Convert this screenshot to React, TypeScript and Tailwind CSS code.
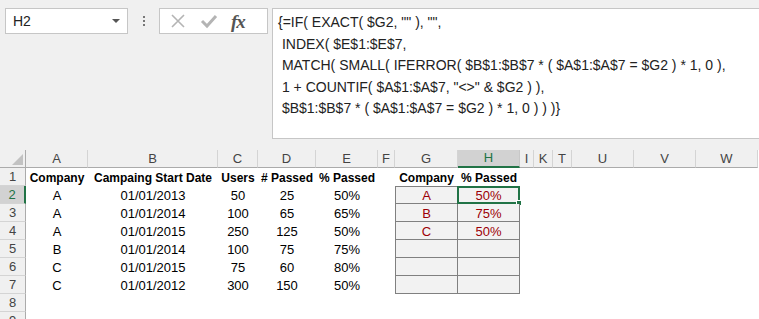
import React from 'react'

// ── Data ──────────────────────────────────────────────────────────────────────

const COLS = ['A', 'B', 'C', 'D', 'E', 'F', 'G', 'H', 'I', 'K', 'T', 'U', 'V', 'W']

const FORMULA = [
  '{=IF( EXACT( $G2, "" ), "",',
  ' INDEX( $E$1:$E$7,',
  ' MATCH( SMALL( IFERROR( $B$1:$B$7 * ( $A$1:$A$7 = $G2 ) * 1, 0 ),',
  ' 1 + COUNTIF( $A$1:$A$7, "<>" & $G2 ) ),',
  ' $B$1:$B$7 * ( $A$1:$A$7 = $G2 ) * 1, 0 ) ) )}',
]

const DATA = [
  ['Company', 'Campaing Start Date', 'Users', '# Passed', '% Passed'],
  ['A', '01/01/2013', '50', '25', '50%'],
  ['A', '01/01/2014', '100', '65', '65%'],
  ['A', '01/01/2015', '250', '125', '50%'],
  ['B', '01/01/2014', '100', '75', '75%'],
  ['C', '01/01/2015', '75', '60', '80%'],
  ['C', '01/01/2012', '300', '150', '50%'],
  ['', '', '', '', ''],
  ['', '', '', '', ''],
]

const LOOKUP = [
  ['Company', '% Passed'],
  ['A', '50%'],
  ['B', '75%'],
  ['C', '50%'],
  ['', ''],
  ['', ''],
  ['', ''],
  null,
  null,
]

// ── Pieces ────────────────────────────────────────────────────────────────────

function FormulaBar() {
  return (
    <div className="flex items-start bg-[#f0f0f0] pt-2 h-[150px]">
      {/* Name box */}
      <div className="ml-[5px] w-[123px] h-[26px] bg-white border border-[#c6c6c6] flex items-center justify-between pl-[7px] pr-[7px]">
        <span className="text-[14px] text-[#222]">H2</span>
        <svg width="8" height="5" viewBox="0 0 8 5">
          <path d="M0 0 L8 0 L4 4 Z" fill="#555" />
        </svg>
      </div>

      {/* Divider dots */}
      <div className="w-[31px] h-[26px] flex flex-col items-center justify-center gap-[2px]">
        <span className="w-[2px] h-[2px] bg-[#777]" />
        <span className="w-[2px] h-[2px] bg-[#777]" />
        <span className="w-[2px] h-[2px] bg-[#777]" />
      </div>

      {/* Cancel / enter / fx */}
      <div className="w-[109px] h-[26px] bg-white border border-[#c6c6c6] flex items-center">
        <svg width="16" height="16" viewBox="0 0 16 16" className="ml-[10px]">
          <path d="M2 2 L14 14 M14 2 L2 14" stroke="#b4b4b4" strokeWidth="1.6" />
        </svg>
        <svg width="18" height="16" viewBox="0 0 18 16" className="ml-[14px]">
          <path d="M2 8 L7 13 L16 3" stroke="#b4b4b4" strokeWidth="3" fill="none" />
        </svg>
        <span className="ml-[13px] font-['Liberation_Serif',serif] italic font-bold text-[19px] text-[#555] leading-none tracking-[-1px]">
          fx
        </span>
      </div>

      {/* Formula text */}
      <div className="ml-[4px] flex-1 h-[131px] bg-white border border-r-0 border-[#c6c6c6] pl-[5px] pt-[3px] text-[14px] leading-[21.5px] text-[#222] whitespace-pre">
        {FORMULA.map((line, i) => (
          <div key={i}>{line}</div>
        ))}
      </div>
    </div>
  )
}

function ColumnHeaders() {
  return (
    <>
      <div className="h-[18px] bg-[#f0f0f0] border-r border-b border-[#ababab] flex items-end justify-end pr-[2px] pb-[2px]">
        <svg width="11" height="11" viewBox="0 0 11 11">
          <path d="M11 0 L11 11 L0 11 Z" fill="#c2c2c2" />
        </svg>
      </div>
      {COLS.map(c =>
        c === 'H' ? (
          <div
            key={c}
            className="h-[18px] bg-[#d2d2d2] border-r border-[#c8c8c8] border-b-2 border-b-[#217346] flex items-center justify-center text-[13px] text-[#217346]"
          >
            {c}
          </div>
        ) : (
          <div
            key={c}
            className="h-[18px] bg-[#f0f0f0] border-r border-r-[#d4d4d4] border-b border-b-[#ababab] flex items-center justify-center text-[13px] text-[#444]"
          >
            {c}
          </div>
        )
      )}
    </>
  )
}

function Row({ n, data, lookup }: { n: number; data: string[]; lookup: string[] | null }) {
  const bold = n === 1
  const selected = n === 2
  const base = 'h-[18px] flex items-center justify-center pt-[2px] whitespace-nowrap'
  const size = bold ? 'font-bold text-[12px]' : 'text-[13px]'
  const cell = `${base} ${size} text-black`
  const boxed = lookup && n > 1
  const lookupCell = boxed
    ? `${base} ${size} bg-[#f2f2f2] border-[#808080] text-[#9c0006] ${n === 2 ? 'border-t' : ''}`
    : cell

  return (
    <>
      <div
        className={`h-[18px] flex items-center justify-center text-[13px] border-b border-b-[#d4d4d4] ${
          selected
            ? 'bg-[#d2d2d2] text-[#217346] border-r-2 border-r-[#217346]'
            : 'bg-[#f0f0f0] text-[#444] border-r border-r-[#ababab]'
        }`}
      >
        {n}
      </div>
      {data.map((v, i) => (
        <div key={i} className={cell}>{v}</div>
      ))}
      <div className={cell} />

      {/* G */}
      <div className={`${lookupCell} ${boxed ? 'border-l border-r border-b' : ''}`}>
        {lookup?.[0]}
      </div>

      {/* H */}
      <div className={`${lookupCell} relative ${boxed ? 'border-r border-b' : ''}`}>
        {lookup?.[1]}
        {selected && (
          <>
            <div className="absolute -left-[1px] -top-[1px] -right-[1px] -bottom-[1px] border-2 border-[#217346]" />
            <div className="absolute -right-[3px] -bottom-[3px] w-[6px] h-[6px] bg-[#217346] border border-white" />
          </>
        )}
      </div>

      {['I', 'K', 'T', 'U', 'V', 'W'].map(c => (
        <div key={c} className="h-[18px]" />
      ))}
    </>
  )
}

// ── App ───────────────────────────────────────────────────────────────────────

export default function App() {
  return (
    <div className="w-[759px] h-[319px] overflow-hidden bg-white font-['Liberation_Sans',Arial,sans-serif]">
      <FormulaBar />
      <div className="grid grid-cols-[26px_62px_130px_40px_58px_62px_17px_63px_62px_14px_19px_19px_62px_62px_62px]">
        <ColumnHeaders />
        {DATA.map((d, i) => (
          <Row key={i} n={i + 1} data={d} lookup={LOOKUP[i]} />
        ))}
      </div>
    </div>
  )
}
